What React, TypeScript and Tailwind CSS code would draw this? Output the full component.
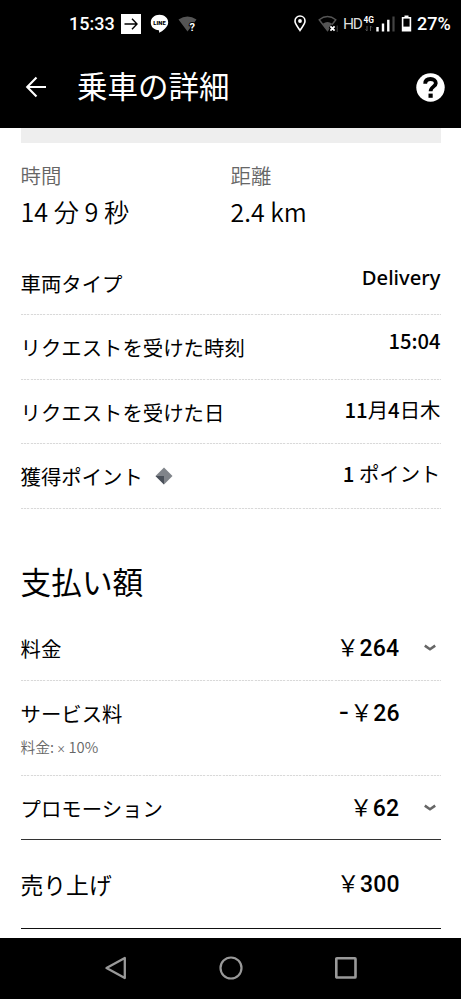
import type { ReactNode } from 'react'

interface RowProps {
  label: string
  value: ReactNode
  valueClass?: string
  icon?: ReactNode
}

function Divider() {
  return (
    <div className="h-px w-full shrink-0 bg-[repeating-linear-gradient(90deg,#d9d9d9_0px,#d9d9d9_2px,#f8f8f8_2px,#f8f8f8_3.2px)]" />
  )
}

function DetailRow({ label, value, valueClass = 'mt-[13px]', icon }: RowProps) {
  return (
    <div className="flex h-[64.5px] flex-col">
      <div className="flex flex-1 items-start justify-between">
        <div className="mt-5 flex items-center text-[20.4px] leading-6">
          {label}
          {icon}
        </div>
        <div className={`text-[20.4px] leading-6 ${valueClass}`}>{value}</div>
      </div>
      <Divider />
    </div>
  )
}

function Amount({ sign, value }: { sign?: string; value: string }) {
  return (
    <div className="flex h-6 items-center text-[23px] leading-6">
      {sign && <span className="w-[11px] origin-left scale-x-125 font-['Roboto'] font-medium">{sign}</span>}
      <span className="w-[23px] pb-1 text-[22.5px]">￥</span>
      <span className="pt-0.5 font-['Roboto'] font-medium tracking-[0.3px]">{value}</span>
    </div>
  )
}

function Chevron() {
  return (
    <svg className="h-[8px] w-[12px]" viewBox="0 0 12 8" fill="none" stroke="#666" strokeWidth="2.6">
      <path d="M0.8 1.6 L6 5.2 L11.2 1.6" />
    </svg>
  )
}

function PointsIcon() {
  return (
    <svg className="ml-[12.5px] size-[18px]" viewBox="0 0 18 18">
      <path d="M9 0.5 L17.5 9 L9 17.5 L0.5 9 Z" fill="#80848a" />
      <path d="M0.5 9 H9 V17.5 Z" fill="#4a5059" />
    </svg>
  )
}

function StatusBar() {
  return (
    <div className="flex h-[47px] items-center font-['Roboto'] text-white">
      <span className="ml-[69px] w-[52px] text-[18px] leading-6 font-medium">15:33</span>
      <svg className="size-5" viewBox="0 0 20 20" fill="none">
        <rect width="20" height="20" fill="#fff" />
        <path d="M3.5 10 H15.5 M11 4.8 L16 10 L11 15.2" stroke="#000" strokeWidth="1.4" />
      </svg>
      <svg className="ml-[9px] h-5 w-[19px]" viewBox="0 0 19 20">
        <path
          d="M9.5 0.8 C14.5 0.8 18.2 4 18.2 8.4 C18.2 13 12.5 17 9.2 18.8 C9 17.5 9.3 17 8.8 16.2 C4.2 15.8 0.8 13 0.8 8.4 C0.8 4 4.5 0.8 9.5 0.8 Z"
          fill="#fff"
        />
        <text x="9.5" y="10.8" textAnchor="middle" fontSize="5.8" fontWeight="900" textLength="12.5" fill="#000">
          LINE
        </text>
      </svg>
      <svg className="ml-[9px] h-5 w-[20px]" viewBox="0 0 20 20">
        <path d="M0.5 5.5 Q9.5 -0.5 18.5 5.5 L9.5 17.5 Z" fill="#555" />
        <text x="11.6" y="16.5" fontSize="11" fontWeight="700" fill="#fff" stroke="#000" strokeWidth="2" paintOrder="stroke">
          ?
        </text>
      </svg>

      <svg className="ml-[96px] h-[17px] w-3" viewBox="0 0 12 17" fill="none">
        <path
          d="M6 1 C8.9 1 11 3.2 11 6 C11 9.3 8 12 6 15.4 C4 12 1 9.3 1 6 C1 3.2 3.1 1 6 1 Z"
          stroke="#fff"
          strokeWidth="1.6"
        />
        <circle cx="6" cy="6" r="1.9" fill="#fff" />
      </svg>
      <svg className="ml-[12px] h-5 w-5" viewBox="0 0 20 20">
        <path d="M1.2 5.8 Q9.5 -0.8 17.8 5.8 L9.5 16.5 Z" fill="none" stroke="#555" strokeWidth="1.4" />
        <path d="M4.8 9.8 Q9.5 6.4 14.2 9.8 L9.5 17 Z" fill="#555" />
        <path d="M12.2 12 L17 17 M17 12 L12.2 17" stroke="#000" strokeWidth="4" />
        <path d="M12.4 12.4 L16.6 16.6 M16.6 12.4 L12.4 16.6" stroke="#fff" strokeWidth="1.8" />
        <path d="M19.2 11.5 V18" stroke="#444" />
      </svg>
      <span className="ml-[5px] w-[19px] text-[15.5px] leading-6 tracking-[-1.2px] text-[#ddd]">HD</span>
      <svg className="ml-px h-[18px] w-3" viewBox="0 0 12 18">
        <text x="0.4" y="7.8" fontSize="9.2" fontWeight="700" textLength="10.5" lengthAdjust="spacingAndGlyphs" fill="#fff">
          4G
        </text>
        <path d="M4 11 V16 M2.6 14.5 L4 16 M7.5 16 V11 M7.5 11 L9 12.5" fill="none" stroke="#555" />
      </svg>
      <svg className="ml-px h-4 w-[19px]" viewBox="0 0 19 16">
        <path d="M1.5 11 V15.5 M7 7.5 V15.5 M12.3 3.8 V15.5" stroke="#fff" strokeWidth="2.4" />
        <path d="M17.5 0.5 V15.5" stroke="#444" strokeWidth="2.2" />
      </svg>
      <svg className="ml-[6px] h-[17px] w-[11px]" viewBox="0 0 11 17">
        <path d="M3.5 0.5 H7.5 V2 H10.2 V16.5 H0.8 V2 H3.5 Z" fill="#fff" />
        <rect x="2.4" y="3.6" width="6.2" height="8" fill="#000" />
      </svg>
      <span className="ml-[5px] text-[18px] leading-6 font-medium">27%</span>
    </div>
  )
}

export default function App() {
  return (
    <div className="flex h-[999px] w-[461px] flex-col overflow-hidden bg-white font-['Noto_Sans_CJK_JP',sans-serif] text-black">
      <div className="h-32 shrink-0 bg-black">
        <StatusBar />
        <header className="flex h-20 items-center text-white">
          <svg className="ml-[25px] h-[22px] w-[22px]" viewBox="0 0 22 22" fill="none" stroke="#fff" strokeWidth="2.1">
            <path d="M21 11 H2.5 M11.5 1.5 L2.2 11 L11.5 20.5" />
          </svg>
          <h1 className="ml-[30px] pb-[5px] text-[30.5px] leading-10 font-normal">乗車の詳細</h1>
          <svg className="mr-[16px] ml-auto size-[29px]" viewBox="0 0 29 29" fill="none">
            <circle cx="14.5" cy="14.5" r="14.2" fill="#fff" />
            <path
              d="M9.2 10.8 C9.2 7.6 11.3 6 14.5 6 C17.8 6 19.8 7.8 19.8 10.2 C19.8 13.6 14.6 13.8 14.6 18.2"
              stroke="#000"
              strokeWidth="3.8"
            />
            <rect x="12.5" y="20.6" width="4.2" height="4.2" fill="#000" />
          </svg>
        </header>
      </div>

      <main className="flex flex-1 flex-col px-[20.5px]">
        <div className="h-[15px] shrink-0 bg-[#eee]" />

        <div className="grid h-[107.9px] shrink-0 grid-cols-2 pt-5">
          <div>
            <div className="text-[20.4px] leading-6 font-[350] text-[#666]">時間</div>
            <div className="mt-2.5 text-[25.2px] leading-7 font-[350]">14 分 9 秒</div>
          </div>
          <div>
            <div className="text-[20.4px] leading-6 font-[350] text-[#666]">距離</div>
            <div className="mt-2.5 text-[25px] leading-7 font-[350]">2.4 km</div>
          </div>
        </div>

        <DetailRow
          label="車両タイプ"
          value={<span className="font-['Noto_Sans'] text-[20.2px] font-medium">Delivery</span>}
        />
        <DetailRow label="リクエストを受けた時刻" value={<span className="text-[20.2px] font-medium">15:04</span>} />
        <DetailRow
          label="リクエストを受けた日"
          valueClass="mt-[17px]"
          value={
            <>
              <span className="font-medium">11</span>月<span className="font-medium">4</span>日木
            </>
          }
        />
        <DetailRow
          label="獲得ポイント"
          icon={<PointsIcon />}
          valueClass="mt-[17px]"
          value={
            <>
              <span className="font-medium">1</span> ポイント
            </>
          }
        />

        <h2 className="mt-[52.6px] text-[30.7px] leading-10 font-normal">支払い額</h2>

        <div className="mt-[15px] flex h-[64.5px] flex-col">
          <div className="flex flex-1 items-center">
            <span className="text-[20.4px] leading-6">料金</span>
            <div className="ml-auto">
              <Amount value="264" />
            </div>
            <div className="ml-[24px] pr-[5px]">
              <Chevron />
            </div>
          </div>
          <Divider />
        </div>

        <div className="flex h-[95px] flex-col">
          <div className="flex flex-1 items-start justify-between pt-5 pr-[40.5px]">
            <div>
              <div className="text-[20.4px] leading-6">サービス料</div>
              <div className="mt-3 text-[14.8px] leading-5 font-[350] text-[#666]">
                料金:<span className="px-[3.5px] font-['Roboto'] text-[14px]">×</span>10%
              </div>
            </div>
            <Amount sign="-" value="26" />
          </div>
          <Divider />
        </div>

        <div className="flex h-[64.5px] items-center border-b border-[#333]">
          <span className="pt-px text-[20.4px] leading-6">プロモーション</span>
          <div className="ml-auto">
            <Amount value="62" />
          </div>
          <div className="ml-[24px] pr-[5px]">
            <Chevron />
          </div>
        </div>

        <div className="flex h-[88.5px] items-center justify-between border-b border-[#111] pr-[40.5px]">
          <span className="pt-0.5 text-[22.8px] leading-7">売り上げ</span>
          <Amount value="300" />
        </div>
      </main>

      <nav className="flex h-[61.5px] shrink-0 items-center bg-black">
        <svg className="ml-[104px] h-6 w-[23px]" viewBox="0 0 23 24" fill="none" stroke="#999" strokeWidth="2.3">
          <path d="M20.8 2 V22 L2.5 12 Z" strokeLinejoin="round" />
        </svg>
        <svg className="ml-[91.5px] size-6" viewBox="0 0 24 24" fill="none" stroke="#999" strokeWidth="2.2">
          <circle cx="12" cy="12" r="10.5" />
        </svg>
        <svg className="ml-[91.5px] size-6" viewBox="0 0 24 24" fill="none" stroke="#999" strokeWidth="2.6">
          <rect x="2.3" y="2.3" width="19.2" height="19.2" rx="0.6" />
        </svg>
      </nav>
    </div>
  )
}
